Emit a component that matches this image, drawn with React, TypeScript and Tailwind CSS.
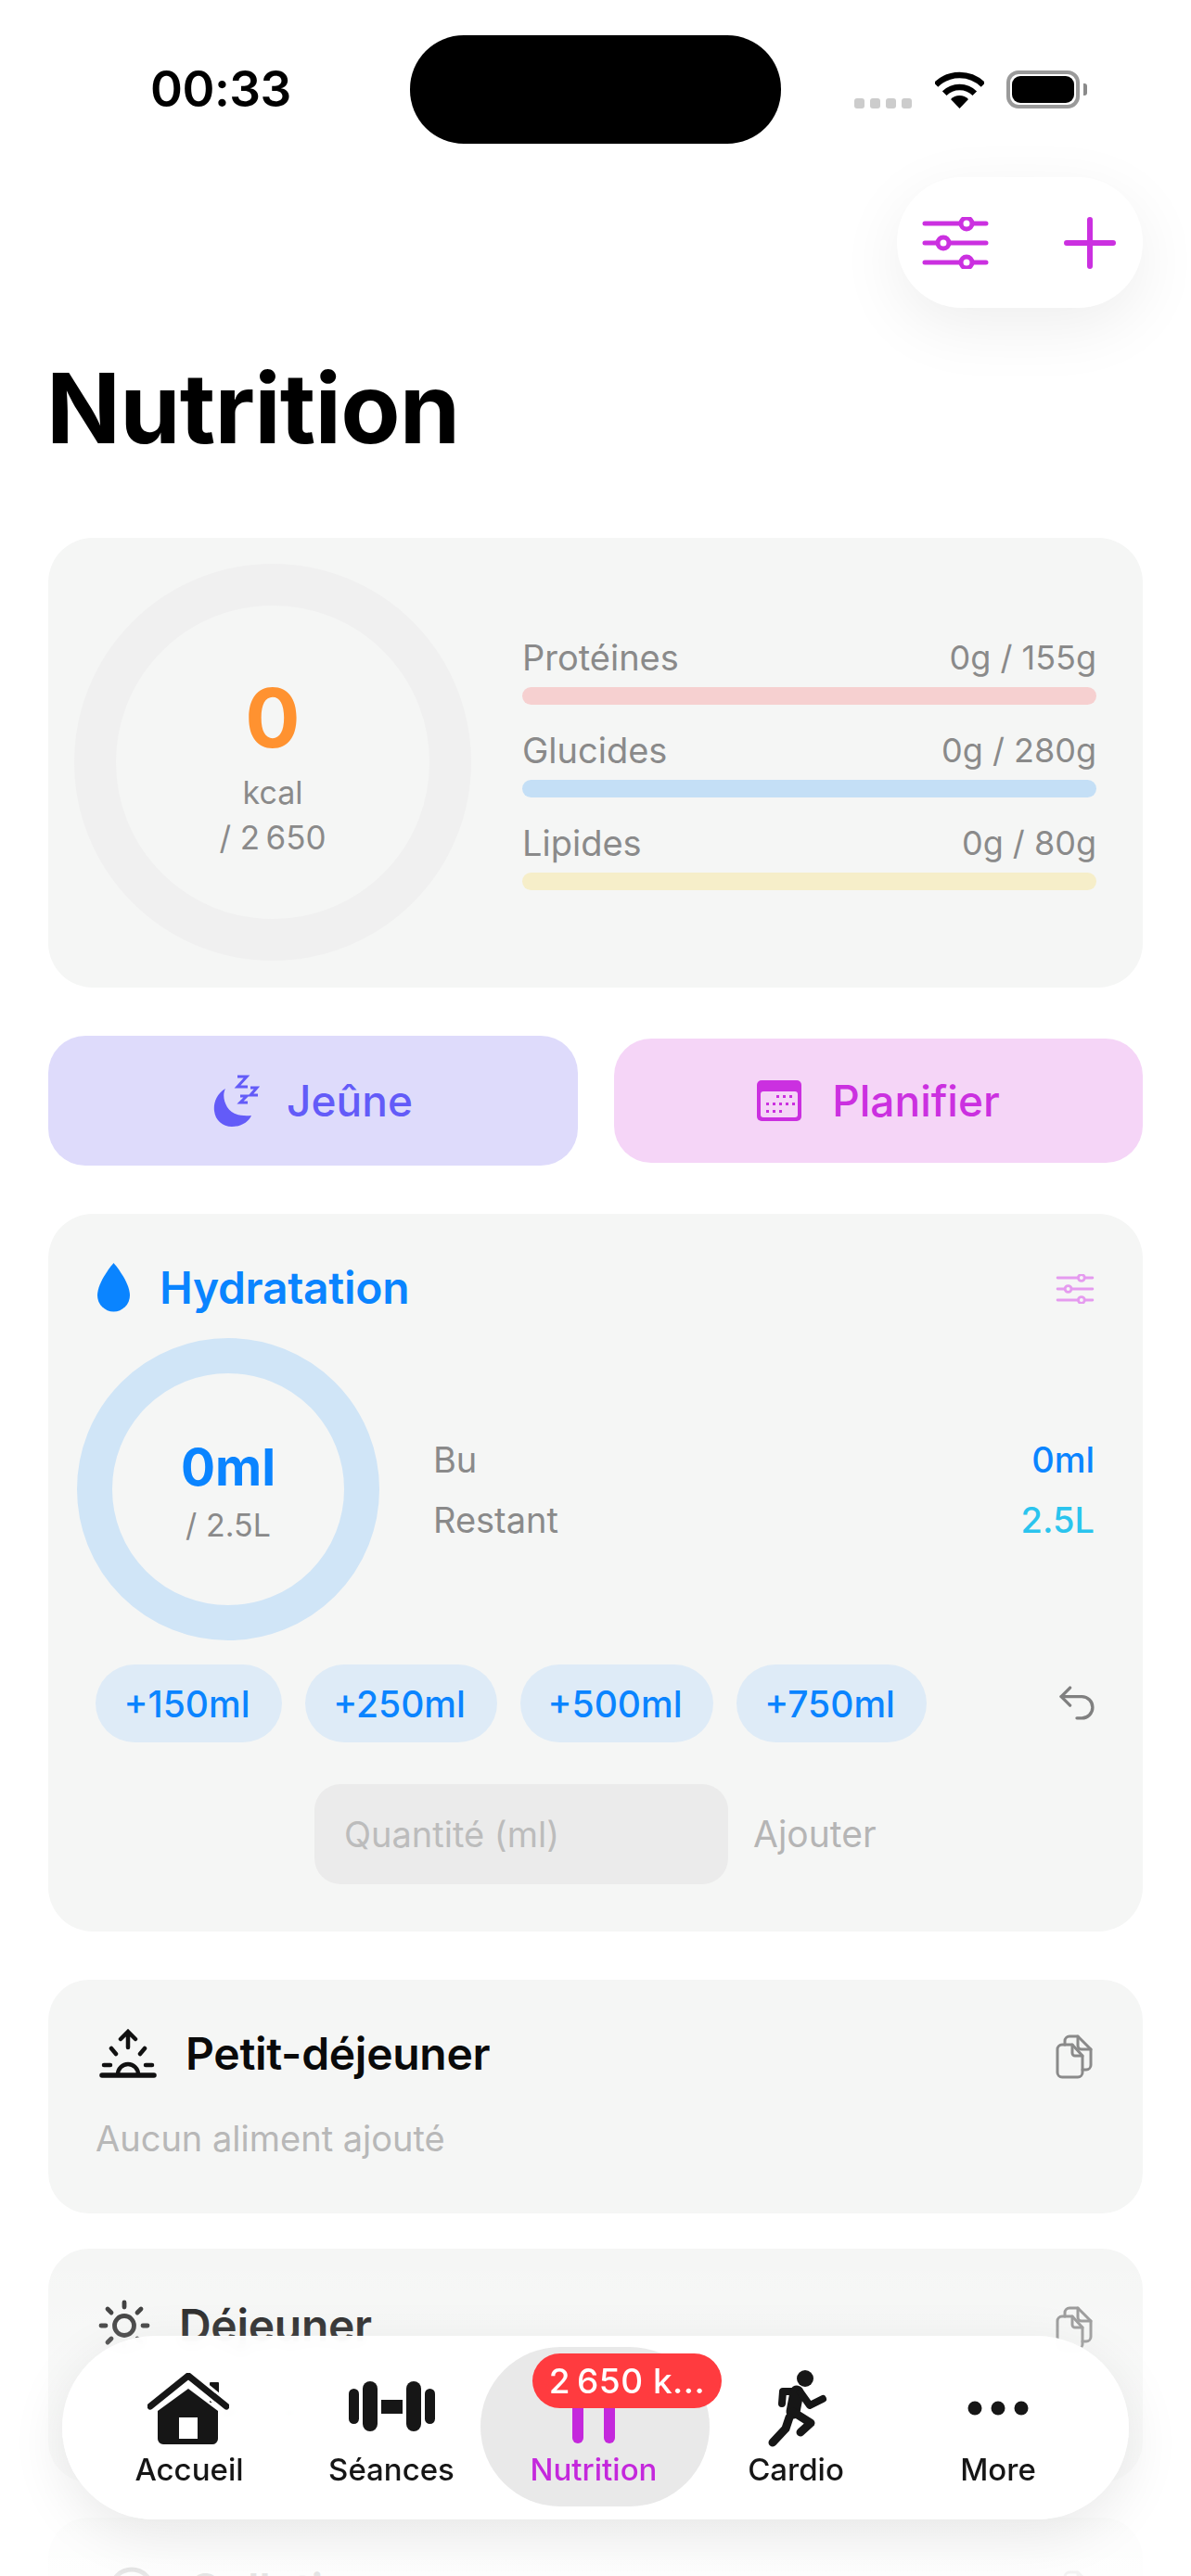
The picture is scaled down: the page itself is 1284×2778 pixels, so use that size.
import { ReactNode } from 'react'

const macros = [
  { label: 'Protéines', value: '0g / 155g', bar: 'bg-[#f6d0d0]' },
  { label: 'Glucides', value: '0g / 280g', bar: 'bg-[#c4dff6]' },
  { label: 'Lipides', value: '0g / 80g', bar: 'bg-[#f6eec9]' },
]

const chips = [
  { label: '+150ml', w: 'w-[201px]' },
  { label: '+250ml', w: 'w-[207px]' },
  { label: '+500ml', w: 'w-[208px]' },
  { label: '+750ml', w: 'w-[205px]' },
]

function Sliders({ className, knob }: { className: string; knob: string }) {
  return (
    <svg viewBox="0 0 72 56" className={className} fill="none" stroke="currentColor" strokeWidth="5" strokeLinecap="round">
      <path d="M3 7H69M3 28H69M3 49H69" />
      <circle cx="48" cy="7" r="6" fill={knob} />
      <circle cx="23" cy="28" r="6" fill={knob} />
      <circle cx="48" cy="49" r="6" fill={knob} />
    </svg>
  )
}

function CopyIcon({ className }: { className: string }) {
  return (
    <svg viewBox="0 0 40 48" className={className} fill="none" stroke="currentColor" strokeWidth="3" strokeLinejoin="round" strokeLinecap="round">
      <path d="M10 11V7a5 5 0 0 1 5-5h9l14 14v17a5 5 0 0 1-5 5h-4" />
      <path d="M24 2v10a4 4 0 0 0 4 4h10" />
      <path d="M7 11h11l11 12v18a5 5 0 0 1-5 5H7a5 5 0 0 1-5-5V16a5 5 0 0 1 5-5z" />
      <path d="M18 11v9a3 3 0 0 0 3 3h8" />
    </svg>
  )
}

function Sunrise() {
  return (
    <svg viewBox="0 0 64 54" className="w-[64px] h-[54px] ml-[2px]" fill="none" stroke="#111" strokeWidth="4.5" strokeLinecap="round">
      <path d="M4 50H60" strokeWidth="5.5" />
      <path d="M21 49a11 11 0 0 1 22 0" />
      <path d="M6 39h7M51 39h7M14 21l5 6M50 21l-5 6M32 20V4M24 11l8-8 8 8" />
    </svg>
  )
}

function Sun() {
  return (
    <svg viewBox="0 0 56 56" className="w-[56px] h-[56px] ml-[2px]" fill="none" stroke="#222" strokeWidth="4.8" strokeLinecap="round">
      <circle cx="28" cy="28" r="10.5" />
      <path d="M28 3v5M28 48v5M3 28h5M48 28h5M10 10l4 4M42 42l4 4M46 10l-4 4M14 42l-4 4" />
    </svg>
  )
}

function Meal({ icon, title, gap, mt, pt }: { icon: ReactNode; title: string; gap: string; mt: string; pt: string }) {
  return (
    <div className={`h-[252px] rounded-[44px] bg-[#f5f6f5] pl-[52px] pr-[54px] ${pt} ${mt}`}>
      <div className="flex items-center h-[56px]">
        <div className={`flex items-center ${gap}`}>
          {icon}
          <span className="text-[48px] leading-[56px] font-semibold tracking-[-0.3px] text-[#0a0a0a]">{title}</span>
        </div>
        <CopyIcon className="w-[40px] h-[48px] ml-auto mt-[6px] text-[#8a8a8a]" />
      </div>
      <p className="mt-[39px] ml-[-1px] text-[38px] leading-[48px] text-[#b8b8b8]">Aucun aliment ajouté</p>
    </div>
  )
}

function NavItem({ label, children, active }: { label: string; children: ReactNode; active?: boolean }) {
  return (
    <div className="relative w-[218px] h-full flex flex-col items-center">
      {active && <div className="absolute top-[12px] left-[-13px] w-[247px] h-[172px] rounded-[86px] bg-[#e9e9e9]" />}
      <div className="relative h-[120px] flex items-end justify-center">{children}</div>
      <span className={`relative mt-[4px] text-[33px] leading-[40px] font-[450] ${active ? 'text-[#c428dc]' : 'text-[#161616]'}`}>{label}</span>
      {active && (
        <div className="absolute top-[19px] left-[43px] w-[204px] h-[59px] rounded-[30px] bg-[#ff3b3f] flex items-center justify-center text-white text-[37px] leading-none font-medium tracking-[0.5px]">
          2{'\u202f'}650 k...
        </div>
      )}
    </div>
  )
}

export default function App() {
  return (
    <div className="relative w-[1284px] h-[2778px] overflow-hidden bg-white font-['Inter',sans-serif]">
      {/* status bar */}
      <div className="flex items-center pt-[38px] h-[155px]">
        <div className="w-[442px] pl-[162px] text-[53px] leading-none font-semibold tracking-[-0.5px] text-black">00:33</div>
        <div className="w-[400px] h-[117px] rounded-[58px] bg-black" />
        <div className="ml-[79px] flex items-center h-[41px]">
          <div className="flex gap-[6px] self-end">
            <span className="w-[11px] h-[11px] rounded-[3px] bg-[#cccccc]" />
            <span className="w-[11px] h-[11px] rounded-[3px] bg-[#cccccc]" />
            <span className="w-[11px] h-[11px] rounded-[3px] bg-[#cccccc]" />
            <span className="w-[11px] h-[11px] rounded-[3px] bg-[#cccccc]" />
          </div>
          <svg viewBox="0 0 53 40" className="w-[53px] h-[40px] ml-[25px]" fill="none" stroke="#000" strokeWidth="6.5">
            <path d="M1 14.5A36 36 0 0 1 52 14.5" />
            <path d="M10.2 23.7A23 23 0 0 1 42.8 23.7" />
            <path d="M26.5 40L17 30A13.4 13.4 0 0 1 36 30Z" fill="#000" stroke="none" />
          </svg>
          <div className="ml-[24px] w-[79px] h-[41px] rounded-[13px] border-[4px] border-[#9a9a9a] p-[2px]">
            <div className="w-full h-full rounded-[9px] bg-black" />
          </div>
          <div className="ml-[4px] w-[4px] h-[13px] rounded-r-[3px] bg-[#8a8a8a]" />
        </div>
      </div>

      <div className="px-[52px]">
        {/* top actions */}
        <div className="flex justify-end mt-[36px]">
          <div className="w-[265px] h-[141px] rounded-[70px] bg-white shadow-[0_20px_70px_rgba(0,0,0,0.07)] flex items-center pl-[27px] text-[#cb30e0]">
            <Sliders className="w-[72px] h-[56px]" knob="#ffffff" />
            <svg viewBox="0 0 56 56" className="w-[56px] h-[56px] ml-[81px]" fill="none" stroke="currentColor" strokeWidth="6" strokeLinecap="round">
              <path d="M28 3V53M3 28H53" />
            </svg>
          </div>
        </div>

        <h1 className="mt-[48px] ml-[-2px] text-[105px] leading-[120px] font-bold tracking-[-0.8px] text-black">Nutrition</h1>

        {/* calories + macros */}
        <div className="mt-[80px] h-[485px] rounded-[48px] bg-[#f5f6f5] p-[28px] flex">
          <div className="w-[428px] h-[428px] rounded-full border-[45px] border-[#f0f0f0] flex flex-col items-center pt-[76px]">
            <span className="text-[88px] leading-[90px] font-bold text-[#ff9230]">0</span>
            <span className="mt-[11px] text-[34px] leading-[49px] text-[#8a8a8a]">kcal</span>
            <span className="text-[35px] leading-[49px] text-[#8a8a8a]">/ 2{'\u202f'}650</span>
          </div>
          <div className="ml-[55px] w-[619px] mt-[78px] self-start flex flex-col gap-[26px]">
            {macros.map(m => (
              <div key={m.label}>
                <div className="h-[46px] flex justify-between items-center text-[#8a8a8a]">
                  <span className="text-[38px] leading-[46px]">{m.label}</span>
                  <span className="text-[36px] leading-[46px]">{m.value}</span>
                </div>
                <div className={`mt-[9px] h-[19px] rounded-full ${m.bar}`} />
              </div>
            ))}
          </div>
        </div>

        {/* fasting / planning */}
        <div className="mt-[52px] flex items-center gap-[39px]">
          <div className="w-[571px] h-[140px] rounded-[40px] bg-[#dedbfb] flex items-center justify-center gap-[29px] text-[#635bf8]">
            <svg viewBox="0 0 50 58" className="w-[50px] h-[58px]" fill="none" stroke="currentColor" strokeWidth="3">
              <path d="M13 16C3 22 0 32 1 40C2 50 10 57 20 57C30 57 38 52 41 45C30 46 20 44 15 36C11 29 10 22 13 16Z" fill="currentColor" stroke="none" />
              <path d="M26 3H36L26 14H37M40 15H47L40 23H48M29 24H36L29 31H37" />
            </svg>
            <span className="text-[46px] leading-none font-medium">Jeûne</span>
          </div>
          <div className="w-[570px] h-[134px] rounded-[40px] bg-[#f5d5f7] flex items-center justify-center gap-[33px] text-[#cb30e0]">
            <svg viewBox="0 0 48 44" className="w-[48px] h-[44px]">
              <rect width="48" height="44" rx="5" fill="currentColor" />
              <rect x="4" y="12" width="40" height="28" rx="3" fill="#f5d5f7" />
              <g fill="currentColor">
                <rect x="21" y="16" width="3" height="3" /><rect x="28" y="16" width="3" height="3" /><rect x="35" y="16" width="3" height="3" />
                <rect x="10" y="24" width="3" height="3" /><rect x="17" y="24" width="3" height="3" /><rect x="24" y="24" width="3" height="3" /><rect x="31" y="24" width="3" height="3" /><rect x="38" y="24" width="3" height="3" />
                <rect x="10" y="32" width="3" height="3" /><rect x="17" y="32" width="3" height="3" /><rect x="24" y="32" width="3" height="3" />
              </g>
            </svg>
            <span className="text-[46px] leading-none font-medium">Planifier</span>
          </div>
        </div>

        {/* hydration */}
        <div className="mt-[52px] h-[774px] rounded-[48px] bg-[#f5f6f5] pt-[53px] pl-[31px] pr-[52px]">
          <div className="flex items-center h-[53px] pl-[22px]">
            <svg viewBox="0 0 35 53" className="w-[35px] h-[53px]">
              <path d="M17.5 0C17.5 0 35 20 35 35A17.5 17.5 0 0 1 0 35C0 20 17.5 0 17.5 0Z" fill="#0a84ff" />
            </svg>
            <span className="ml-[32px] text-[48px] leading-none font-semibold tracking-[-0.3px] text-[#0a84ff]">Hydratation</span>
            <Sliders className="w-[42px] h-[32px] ml-auto mt-[2px] text-[#e59bef]" knob="#f5f6f5" />
          </div>

          <div className="mt-[28px] flex">
            <div className="w-[326px] h-[326px] rounded-full border-[38px] border-[#d0e5f7] flex flex-col items-center pt-[69px]">
              <span className="text-[55px] leading-[64px] font-bold text-[#0a84ff]">0ml</span>
              <span className="mt-[9px] text-[34px] leading-[44px] text-[#8a8a8a]">/ 2.5L</span>
            </div>
            <div className="ml-[58px] flex-1 pt-[108px] text-[38px] leading-[46px]">
              <div className="flex justify-between">
                <span className="text-[#8a8a8a]">Bu</span>
                <span className="font-medium text-[#0a84ff]">0ml</span>
              </div>
              <div className="mt-[19px] flex justify-between">
                <span className="text-[#8a8a8a]">Restant</span>
                <span className="font-medium text-[#2ac4ee]">2.5L</span>
              </div>
            </div>
          </div>

          <div className="mt-[26px] ml-[20px] flex items-center">
            <div className="flex gap-[25px]">
              {chips.map(c => (
                <div key={c.label} className={`${c.w} h-[84px] rounded-[42px] bg-[#deebf7] flex items-center justify-center text-[39px] leading-none font-medium text-[#0a84ff] pr-[4px]`}>
                  {c.label}
                </div>
              ))}
            </div>
            <svg viewBox="0 0 36 36" className="w-[38px] h-[38px] ml-auto" fill="none" stroke="#808080" strokeWidth="3.2" strokeLinecap="round" strokeLinejoin="round">
              <path d="M11 2L2 11L11 20" />
              <path d="M2 11H23A11 11 0 0 1 23 33H18" />
            </svg>
          </div>

          <div className="mt-[45px] ml-[256px] flex items-center">
            <div className="w-[446px] h-[108px] rounded-[28px] bg-[#ebebeb] flex items-center pl-[32px] text-[38px] text-[#bcbcbc]">Quantité (ml)</div>
            <span className="ml-[27px] text-[39px] text-[#b5b5b5]">Ajouter</span>
          </div>
        </div>

        {/* meals */}
        <Meal mt="mt-[52px]" pt="pt-[52px]" gap="gap-[30px]" icon={<Sunrise />} title="Petit-déjeuner" />
        <Meal mt="mt-[38px]" pt="pt-[55px]" gap="gap-[31px]" icon={<Sun />} title="Déjeuner" />
        <Meal
          mt="mt-[38px]"
          pt="pt-[50px]"
          gap="gap-[33px]"
          icon={
            <svg viewBox="0 0 56 56" className="w-[56px] h-[56px] ml-[10px]" fill="none" stroke="#222" strokeWidth="4.8">
              <circle cx="28" cy="28" r="22" />
            </svg>
          }
          title="Collation"
        />
      </div>

      {/* fade under the tab bar */}
      <div className="absolute left-0 right-0 top-[2430px] bottom-0 bg-gradient-to-b from-white/0 to-white/90" />

      {/* tab bar */}
      <div className="absolute left-[67px] top-[2519px] w-[1150px] h-[198px] rounded-[99px] bg-white/95 backdrop-blur-sm shadow-[0_16px_60px_rgba(0,0,0,0.09)] flex pl-[28px]">
        <NavItem label="Accueil">
          <svg viewBox="0 0 88 80" className="w-[88px] h-[80px] ml-[-2px]">
            <rect x="67" y="10" width="10" height="22" rx="1" fill="#161616" />
            <path d="M44 17L76 41V71a6 6 0 0 1-6 6H17a6 6 0 0 1-6-6V41Z" fill="#161616" />
            <rect x="34" y="48" width="20" height="23" fill="#fff" />
            <path d="M3 36L44 3L85 36" fill="none" stroke="#fff" strokeWidth="13" />
            <path d="M3 36L44 3L85 36" fill="none" stroke="#161616" strokeWidth="7" strokeLinecap="round" strokeLinejoin="round" />
          </svg>
        </NavItem>
        <NavItem label="Séances">
          <svg viewBox="0 0 93 54" className="w-[93px] h-[54px] mb-[17px]" fill="#161616">
            <rect x="0" y="8" width="11" height="38" rx="5.5" />
            <rect x="15" y="0" width="16" height="54" rx="8" />
            <rect x="35" y="20" width="23" height="15" />
            <rect x="62" y="0" width="16" height="54" rx="8" />
            <rect x="82" y="8" width="11" height="38" rx="5.5" />
          </svg>
        </NavItem>
        <NavItem label="Nutrition" active>
          <svg viewBox="0 0 50 80" className="w-[50px] h-[80px] mb-[4px]" fill="#c428dc">
            <rect x="2" y="0" width="12" height="80" rx="6" />
            <rect x="36" y="0" width="12" height="80" rx="6" />
          </svg>
        </NavItem>
        <NavItem label="Cardio">
          <svg viewBox="0 0 66 84" className="w-[66px] h-[84px] ml-[4px]" fill="none" stroke="#161616" strokeLinecap="round" strokeLinejoin="round">
            <circle cx="41" cy="10" r="9" fill="#161616" stroke="none" />
            <path d="M16 37L17 24H34" strokeWidth="8" />
            <path d="M32 25L28 46" strokeWidth="15" />
            <path d="M36 25L46 39L60 32" strokeWidth="8" />
            <path d="M28 46L47 58L36 68" strokeWidth="9" />
            <path d="M24 52L20 64L6 79" strokeWidth="9" />
          </svg>
        </NavItem>
        <NavItem label="More">
          <svg viewBox="0 0 66 16" className="w-[66px] h-[16px] mb-[34px]" fill="#161616">
            <circle cx="8" cy="8" r="7.5" />
            <circle cx="33" cy="8" r="7.5" />
            <circle cx="58" cy="8" r="7.5" />
          </svg>
        </NavItem>
      </div>
    </div>
  )
}
